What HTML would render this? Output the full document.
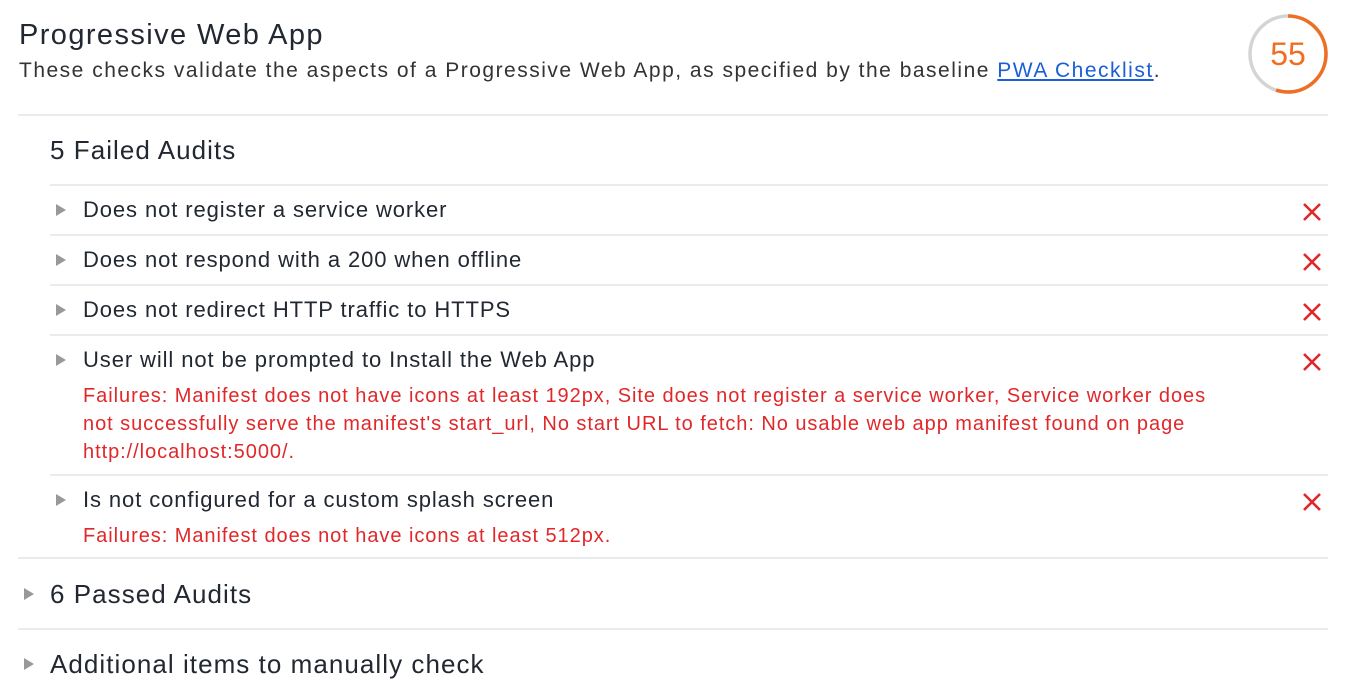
<!DOCTYPE html>
<html><head><meta charset="utf-8"><style>
body{margin:0;width:1352px;height:700px;background:#fff;font-family:"Liberation Sans",Arial,sans-serif;color:#222831;position:relative;overflow:hidden}
.a{position:absolute;white-space:nowrap}
.l{position:absolute;height:2px;background:#ebebeb;right:24px}
.t{font-size:22px;line-height:30px;left:83px;letter-spacing:0.9px}
.f{font-size:20px;line-height:28px;left:83px;color:#e0282a;letter-spacing:0.95px}
.h{font-size:26px;line-height:30px;letter-spacing:1.05px}
.tri{position:absolute;width:0;height:0;border-left:10px solid #999;border-top:6px solid transparent;border-bottom:6px solid transparent}
.x{position:absolute;left:1302px;width:20px;height:20px}
</style></head><body>
<div class="a" style="left:19px;top:17px;font-size:29px;line-height:36px;letter-spacing:1.4px">Progressive Web App</div>
<div class="a" style="left:19px;top:58px;font-size:21px;line-height:26px;color:#333;letter-spacing:1.5px">These checks validate the aspects of a Progressive Web App, as specified by the baseline <span style="color:#1a5fd6;text-decoration:underline">PWA Checklist</span>.</div>
<svg class="a" style="left:1246px;top:12px" width="84" height="84" viewBox="0 0 84 84">
<circle cx="42" cy="42" r="38" fill="none" stroke="#d4d4d4" stroke-width="3.5"/>
<circle cx="42" cy="42" r="38" fill="none" stroke="#ef6f22" stroke-width="3.5" stroke-dasharray="131.3 300" transform="rotate(-90 42 42)"/>
<text x="42" y="53" text-anchor="middle" font-family="Liberation Sans,sans-serif" font-size="32" fill="#ef6f22">55</text>
</svg>
<div class="l" style="left:18px;top:114px"></div>
<div class="a h" style="left:50px;top:135px">5 Failed Audits</div>
<div class="l" style="left:50px;top:184px"></div>
<div class="tri" style="left:56px;top:204px"></div><div class="a t" style="top:195px">Does not register a service worker</div>
<div class="l" style="left:50px;top:234px"></div>
<div class="tri" style="left:56px;top:254px"></div><div class="a t" style="top:245px">Does not respond with a 200 when offline</div>
<div class="l" style="left:50px;top:284px"></div>
<div class="tri" style="left:56px;top:304px"></div><div class="a t" style="top:295px">Does not redirect HTTP traffic to HTTPS</div>
<div class="l" style="left:50px;top:334px"></div>
<div class="tri" style="left:56px;top:354px"></div><div class="a t" style="top:345px">User will not be prompted to Install the Web App</div>
<div class="a f" style="top:382px">Failures: Manifest does not have icons at least 192px, Site does not register a service worker, Service worker does<br>not successfully serve the manifest's start_url, No start URL to fetch: No usable web app manifest found on page<br>http://localhost:5000/.</div>
<div class="l" style="left:50px;top:474px"></div>
<div class="tri" style="left:56px;top:494px"></div><div class="a t" style="top:485px">Is not configured for a custom splash screen</div>
<div class="a f" style="top:522px">Failures: Manifest does not have icons at least 512px.</div>
<div class="l" style="left:18px;top:557px"></div>
<div class="tri" style="left:24px;top:588px"></div><div class="a h" style="left:50px;top:579px">6 Passed Audits</div>
<div class="l" style="left:18px;top:628px"></div>
<div class="tri" style="left:24px;top:658px"></div><div class="a h" style="left:50px;top:649px">Additional items to manually check</div>
<svg class="x" style="top:202px" viewBox="0 0 20 20"><path d="M2 2L18 18M18 2L2 18" stroke="#e0282a" stroke-width="2.6"/></svg>
<svg class="x" style="top:252px" viewBox="0 0 20 20"><path d="M2 2L18 18M18 2L2 18" stroke="#e0282a" stroke-width="2.6"/></svg>
<svg class="x" style="top:302px" viewBox="0 0 20 20"><path d="M2 2L18 18M18 2L2 18" stroke="#e0282a" stroke-width="2.6"/></svg>
<svg class="x" style="top:352px" viewBox="0 0 20 20"><path d="M2 2L18 18M18 2L2 18" stroke="#e0282a" stroke-width="2.6"/></svg>
<svg class="x" style="top:492px" viewBox="0 0 20 20"><path d="M2 2L18 18M18 2L2 18" stroke="#e0282a" stroke-width="2.6"/></svg>
</body></html>
